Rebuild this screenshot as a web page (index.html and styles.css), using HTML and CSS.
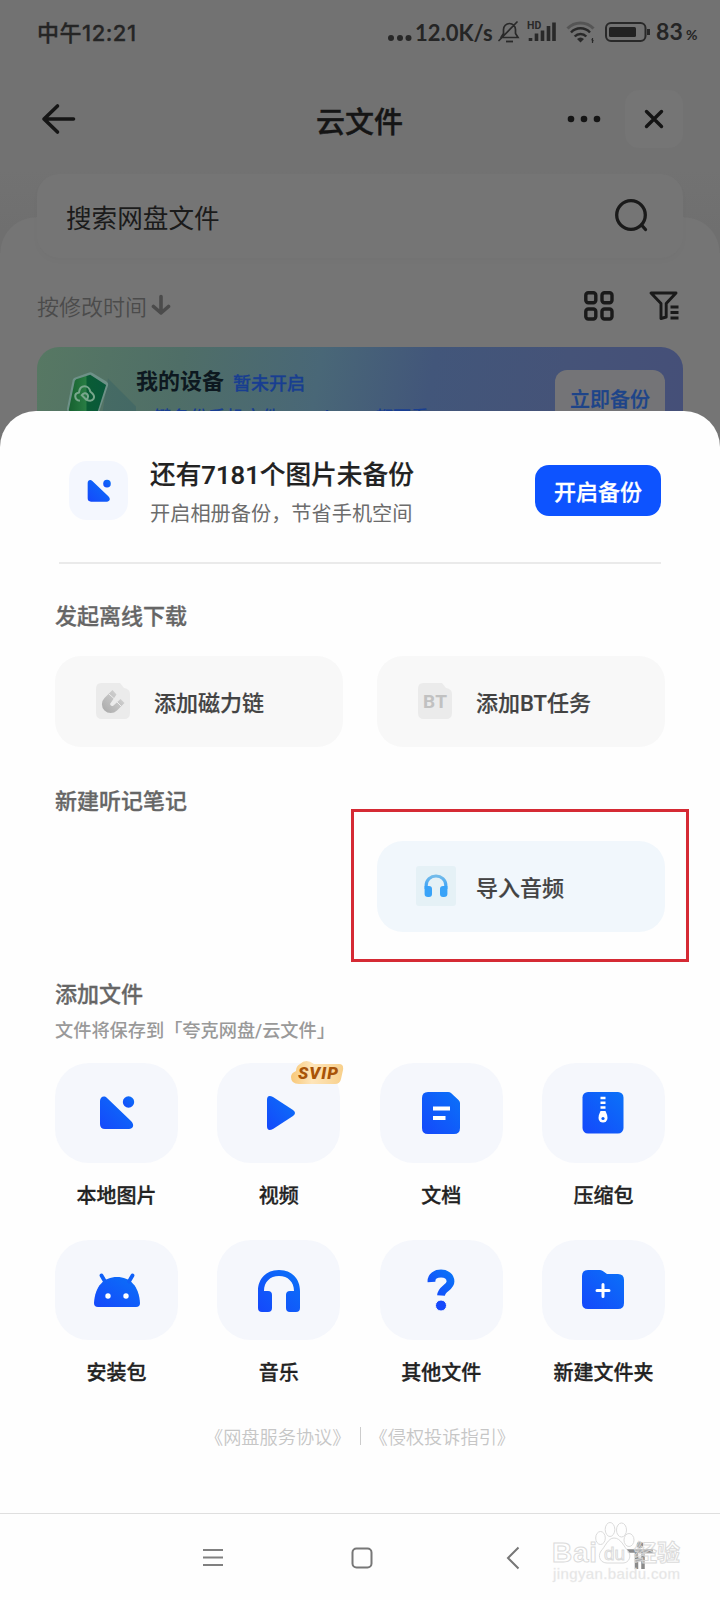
FILE: index.html
```html
<!DOCTYPE html>
<html lang="zh-CN">
<head>
<meta charset="utf-8">
<title>云文件</title>
<link rel="stylesheet" href="styles.css">
</head>
<body>
<svg width="0" height="0" class="defs">
  <defs>
    <linearGradient id="blue" x1="1" y1="0" x2="0" y2="1"><stop offset="0" stop-color="#0a72f8"/><stop offset="1" stop-color="#1548fb"/></linearGradient>
    <linearGradient id="sky" x1="0" y1="0" x2="0" y2="1"><stop offset="0" stop-color="#72bbea"/><stop offset="1" stop-color="#359ff8"/></linearGradient>
    <linearGradient id="gray" x1="1" y1="0" x2="0" y2="1"><stop offset="0" stop-color="#dadada"/><stop offset="1" stop-color="#a8a8a8"/></linearGradient>
    <linearGradient id="gold" x1="0" y1="0" x2="1" y2="0"><stop offset="0" stop-color="#f8c878"/><stop offset=".4" stop-color="#fee5ba"/><stop offset="1" stop-color="#f8d08b"/></linearGradient>
    <linearGradient id="green" x1="0" y1="0" x2="1" y2="0"><stop offset="0" stop-color="#16602f"/><stop offset=".45" stop-color="#287c43"/><stop offset=".5" stop-color="#0a5c35"/><stop offset="1" stop-color="#08583a"/></linearGradient>
  </defs>
</svg>
<main class="screen">
  <section class="page">
    <div class="status">
      <span class="clock">中午12:21</span>
      <svg class="status-dots" width="24" height="8" viewBox="0 0 24 8" fill="#272727"><circle cx="3" cy="4" r="3"/><circle cx="12" cy="4" r="3"/><circle cx="20.500" cy="4" r="3"/></svg>
      <span class="speed">12.0K/s</span>
      <svg class="status-icons" width="160" height="26" viewBox="498 20 160 26" fill="none" stroke="#292929" stroke-width="1.700">
        <path d="M501 37.500h17l-2.500-4v-4a6 6 0 0 0-12 0v4L501 37.500M499 40.500L517 22" stroke-linecap="round"/>
        <path d="M506 41.500h7" stroke-width="1.800"/>
        <text x="527" y="29" fill="#292929" stroke="none" class="hd">HD</text>
        <path d="M530.500 41v-3M536.500 41v-7.500M542.500 41V30.500M548.500 41V26M554 41V22.500" stroke-width="3.600"/>
        <path d="M567.500 28.500a18 18 0 0 1 26 0" stroke="#555" stroke-width="3"/>
        <path d="M571 32.500a13 13 0 0 1 19 0M574.700 36.500a8 8 0 0 1 11.600 0" stroke-width="2.500"/>
        <path d="M577 39l3.500 3.500L584 39q-3.500-3-7 0" fill="#292929" stroke="none"/>
        <path d="M592.500 38v5M591.500 39.500l2 1.500" stroke-width="1.200"/>
        <rect x="606" y="23" width="39.500" height="18" rx="5" stroke-width="2"/>
        <rect x="609" y="27" width="27" height="10" rx="1.500" fill="#222" stroke="none"/>
        <path d="M648.500 29v6" stroke-width="3"/>
      </svg>
      <span class="battery">83<small>%</small></span>
    </div>
    <header class="topbar">
      <svg class="back" width="36" height="32" viewBox="0 0 36 32" fill="none" stroke="#151515" stroke-width="3.600" stroke-linecap="round" stroke-linejoin="round"><path d="M33.500 16H4M17.500 3L4 16l13.500 13"/></svg>
      <h1>云文件</h1>
      <svg class="more" width="36" height="10" viewBox="0 0 36 10" fill="#151515"><circle cx="5" cy="5" r="3.300"/><circle cx="18" cy="5" r="3.300"/><circle cx="31" cy="5" r="3.300"/></svg>
      <div class="close"><svg width="22" height="22" viewBox="0 0 22 22" stroke="#141414" stroke-width="3.400" stroke-linecap="round"><path d="M3.500 3.500l15 15M18.500 3.500l-15 15"/></svg></div>
    </header>
    <div class="panel">
      <div class="search"><span>搜索网盘文件</span>
        <svg width="36" height="36" viewBox="0 0 36 36" fill="none" stroke="#1a1a1a" stroke-width="3.300" stroke-linecap="round"><circle cx="18" cy="18" r="14.300"/><path d="M28.500 28l4 4.500"/></svg>
      </div>
      <div class="sort"><span>按修改时间</span>
        <svg class="down" width="20" height="22" viewBox="0 0 20 22" fill="none" stroke="#4b4b4b" stroke-width="3.600" stroke-linecap="round" stroke-linejoin="round"><path d="M10 2.500V18M2.500 12.500L10 19l7.500-6.500"/></svg>
        <svg class="grid-icon" width="30" height="30" viewBox="0 0 30 30" fill="none" stroke="#1a1a1a" stroke-width="3.400"><rect x="1.800" y="1.800" width="10" height="10" rx="2.500"/><rect x="18" y="1.800" width="10" height="10" rx="2.500"/><rect x="1.800" y="18" width="10" height="10" rx="2.500"/><rect x="18" y="18" width="10" height="10" rx="2.500"/></svg>
        <svg width="32" height="32" viewBox="0 0 32 32" fill="none" stroke="#1a1a1a" stroke-width="2.900" stroke-linejoin="round"><path d="M3 3h25L18.200 13.500V27l-5.200 1.500v-15z"/><path d="M22.500 17h8M22.500 22.500h8M22.500 28h8"/></svg>
      </div>
      <div class="device">
        <svg class="shield" width="76" height="66" viewBox="0 0 76 66"><path d="M46 12l32 32v30H36z" fill="#164d63" opacity=".2"/><path d="M29 6q-2-1-4 0L11 11q-3 1-3 4L2 45q0 3 3 5l10 8h18l13-38q1-3-2-5z" fill="#6e9188"/><path d="M27 8L12 13q-2 1-2 4L4 46l12 14h15L44 19z" fill="url(#green)"/><path d="M16 36c-6-1-7-8-1-9 1-9 11-8 12-1 8 6 3 12-4 9l-5-5c4-5 9 0 5 5" fill="none" stroke="#78a68c" stroke-width="2.200"/></svg>
        <div class="device-copy">
          <div class="device-title"><strong>我的设备</strong><span>暂未开启</span></div>
          <div class="device-sub">一键备份手机文件，Pad、Pc/都可看</div>
        </div>
        <div class="device-btn">立即备份</div>
      </div>
    </div>
  </section>

  <section class="sheet">
    <div class="notice">
      <div class="notice-icon"><svg width="24" height="24" viewBox="0 0 36 36" fill="url(#blue)"><path d="M1 6C1 2 5 0 8 3l24 23c4 4 2 8-2 8H6q-5 0-5-5z"/><circle cx="30" cy="7" r="5.700"/></svg></div>
      <div class="notice-copy"><h2>还有7181个图片未备份</h2><p>开启相册备份，节省手机空间</p></div>
      <div class="start">开启备份</div>
    </div>
    <h3 class="h-download">发起离线下载</h3>
    <div class="pair">
      <div class="action">
        <svg width="36" height="38" viewBox="0 0 36 38"><path d="M6 1h19l4 5q6 1 6 6v19q0 6-6 6H7q-6 0-6-6V7q0-6 5-6z" fill="#ebebeb"/><path d="M17.500 8l-8 8a8.800 8.800 0 0 0 12.500 12.500l7.500-7.500-4-4-7 6.500q-2.500 1.500-3.500-1.500l6.500-9.500z" fill="url(#gray)"/><path d="M14 12l5 4.500M22 20l4.500 4.500" stroke="#ededed" stroke-width="1"/></svg>
        <span>添加磁力链</span>
      </div>
      <div class="action">
        <svg width="36" height="38" viewBox="0 0 36 38"><path d="M6 1h19l4 5q6 1 6 6v19q0 6-6 6H7q-6 0-6-6V7q0-6 5-6z" fill="#ebebeb"/><text x="6" y="26" class="bt" textLength="24">BT</text></svg>
        <span>添加BT任务</span>
      </div>
    </div>
    <h3 class="h-note">新建听记笔记</h3>
    <div class="highlight">
      <div class="action audio">
        <svg width="40" height="40" viewBox="0 0 40 40"><rect width="40" height="40" rx="3" fill="#e5f1f6"/><path d="M10.200 23v-4a9.800 9 0 0 1 19.600 0v4" fill="none" stroke="url(#sky)" stroke-width="3.200"/><path d="M8.600 20h4.400q3 0 3 3v5q0 3-3 3h-1q-3.400 0-3.400-3zM31.400 20H27q-3 0-3 3v5q0 3 3 3h1q3.400 0 3.400-3z" fill="#39a3f8"/></svg>
        <span>导入音频</span>
      </div>
    </div>
    <h3 class="h-add">添加文件</h3>
    <p class="save-path">文件将保存到「夸克网盘/云文件」</p>
    <div class="tiles">
      <div class="item"><div class="tile"><svg width="36" height="36" viewBox="0 0 36 36" fill="url(#blue)"><path d="M1 6C1 2 5 0 8 3l24 23c4 4 2 8-2 8H6q-5 0-5-5z"/><circle cx="29.500" cy="7" r="5.700"/></svg></div><span>本地图片</span></div>
      <div class="item"><div class="tile"><svg class="play" width="32" height="38" viewBox="0 0 32 38" fill="url(#blue)"><path d="M2 6q0-6 6-3l20 13q4 3 0 6L8 35q-6 3-6-3z"/></svg>
        <svg class="svip" width="54" height="26" viewBox="0 0 54 26"><path d="M10 4q6-6 14 0h25q5 0 4 6l-2 9q-1 5-6 5H9q-8 0-8-7 0-4 5-6 0-5 4-7z" fill="url(#gold)"/><text x="8" y="19" class="svip-text" fill="#a85308" textLength="40">SVIP</text></svg></div><span>视频</span></div>
      <div class="item"><div class="tile"><svg width="38" height="42" viewBox="0 0 38 42"><path d="M6 0h20q2 0 3 1l7.500 7q1.500 1.500 1.500 3v25q0 6-6 6H6q-6 0-6-6V6q0-6 6-6z" fill="url(#blue)"/><path d="M11 16.500h17M11 26h12.500" stroke="#fff" stroke-width="4"/></svg></div><span>文档</span></div>
      <div class="item"><div class="tile"><svg width="42" height="42" viewBox="0 0 42 42"><rect x=".5" y="0" width="41" height="41.500" rx="5.500" fill="url(#blue)"/><path d="M18.500 6h5M18.500 10.800h5M18.500 15.500h5" stroke="#fff" stroke-width="2.400"/><path d="M18.500 19h5q2 4 2 7a4.500 4.500 0 0 1-9 0q0-3 2-7z" fill="#fff"/><circle cx="21" cy="26.500" r="1.600" fill="#0b60fa"/></svg></div><span>压缩包</span></div>
      <div class="item"><div class="tile"><svg class="android" width="46" height="34" viewBox="0 -2 46 34" fill="url(#blue)"><path d="M0 28C1 11 10 2 23 2s22 9 23 26q0 4-4 4H4q-4 0-4-4z"/><path d="M7.500 .5l3.500 6M38.500 .5l-3.500 6" stroke="#0f60f8" stroke-width="3.800" stroke-linecap="round"/><circle cx="14" cy="21" r="2.700" fill="#fff"/><circle cx="32" cy="21" r="2.700" fill="#fff"/></svg></div><span>安装包</span></div>
      <div class="item"><div class="tile"><svg class="phones" width="42" height="42" viewBox="0 0 42 42" fill="url(#blue)"><path d="M0 21C0 9 8 0 21 0s21 9 21 21v17q0 4-4 4h-6q-4 0-4-4V25q0-4 4-4h4C36 12 30 6 21 6S6 12 6 21h4q4 0 4 4v13q0 4-4 4H4q-4 0-4-4z"/></svg></div><span>音乐</span></div>
      <div class="item"><div class="tile"><svg width="28" height="42" viewBox="0 0 28 42"><path d="M4.500 13C4 7 9 4.500 14 4.500c5 0 9.500 3 9.500 8 0 6-9 7-9.500 14" fill="none" stroke="url(#blue)" stroke-width="7.800" stroke-linejoin="round"/><circle cx="14" cy="36.500" r="5.500" fill="#1548fb" stroke="#f5f7fc"/></svg></div><span>其他文件</span></div>
      <div class="item"><div class="tile"><svg width="42" height="42" viewBox="0 0 42 42"><path d="M6 1h12q2 0 3.500 1.500L25 5h11q6 0 6 6v23q0 6-6 6H6q-6 0-6-6V7q0-6 6-6z" fill="url(#blue)"/><path d="M15 21.500h12M21 15.500v12" stroke="#fff" stroke-width="3" stroke-linecap="round"/></svg></div><span>新建文件夹</span></div>
    </div>
    <div class="legal"><span>《网盘服务协议》</span><i></i><span>《侵权投诉指引》</span></div>
    <nav class="nav">
      <svg width="20" height="22" viewBox="0 0 20 22" stroke="#808080" stroke-width="2"><path d="M0 3h20M0 10.500h20M0 18h20"/></svg>
      <svg width="22" height="22" viewBox="0 0 22 22" fill="none" stroke="#777" stroke-width="2"><rect x="1.500" y="1.500" width="19" height="19" rx="4"/></svg>
      <svg width="14" height="24" viewBox="0 0 14 24" fill="none" stroke="#777" stroke-width="2"><path d="M12.500 1.500L2 12l10.500 10.500"/></svg>
      <svg class="person" width="28" height="30" viewBox="626 1540 28 30" fill="none" stroke="#8a8a8a" stroke-width="3.500"><circle cx="640" cy="1544" r="1.500"/><path d="M627 1550h26M636.500 1550v18M643 1550v18M637 1558.500h6"/></svg>
    </nav>
    <svg class="watermark" width="132" height="66" viewBox="550 1520 132 66" fill="#fff" stroke="#d8d8d8" stroke-width="1">
      <ellipse cx="600.500" cy="1538" rx="4.800" ry="6.500"/><ellipse cx="610" cy="1529.500" rx="4.800" ry="7"/><ellipse cx="621.500" cy="1530" rx="5" ry="7"/><ellipse cx="629" cy="1540" rx="5" ry="6.500"/>
      <path d="M614 1538c-6 0-9 9-13 13-4 6 0 12 6 12h16c6 0 9-7 5-12-4-4-7-13-14-13z"/>
      <text x="552" y="1562" class="wm-main" textLength="45">Bai</text><text x="604" y="1560" class="wm-du">du</text><text x="634" y="1561" class="wm-cn" fill-opacity=".35">经验</text><text x="553" y="1579" class="wm-url" textLength="127">jingyan.baidu.com</text>
    </svg>
  </section>
</main>
</body>
</html>
```

FILE: styles.css
```css
* { box-sizing: border-box; }
body { margin: 0; font-family: Roboto, "Noto Sans CJK SC", sans-serif; }
h1, h2, h3, p { margin: 0; font-weight: 500; white-space: nowrap; }
svg { display: block; flex: none; }
.defs { position: absolute; }
.screen { position: relative; width: 720px; height: 1600px; overflow: hidden; background: #fefefe; }

.page { height: 460px; background: linear-gradient(#727272 0, #727272 170px, #6f6f6f 230px); overflow: hidden; }
.status { height: 64px; display: flex; align-items: center; padding-left: 37px; color: #252525; font: 500 22px/32px Lato, "Noto Sans CJK SC", sans-serif; white-space: nowrap; }
.clock { width: 351px; padding-top: 1px; font-family: Inter, "Noto Sans CJK SC", sans-serif; font-weight: 500; font-size: 22px; letter-spacing: .5px; -webkit-text-stroke: .3px #252525; }
.status-dots { margin-top: 12px; }
.speed { width: 83px; margin-left: 3px; padding-top: 1px; font-size: 22px; font-weight: 700; }
.status-icons { margin-top: 1px; }
.battery { padding-top: 1px; font-size: 23px; font-weight: 700; margin-left: -2px; letter-spacing: .2px; }
.battery small { font-size: 14px; margin-left: 3px; }
.hd { font: 700 10.500px Roboto, sans-serif; }

.topbar { height: 110px; display: flex; align-items: flex-start; padding: 26px 37px 0 40px; color: #151515; }
.back { margin-top: 13px; }
.topbar h1 { margin: 13px 0 0 240px; width: 250px; font-size: 29px; line-height: 40px; -webkit-text-stroke: .4px; }
.more { margin-top: 24px; }
.close { width: 58px; height: 58px; margin-left: 23px; border-radius: 14px; background: #757575; display: grid; place-items: center; }

.panel { padding: 0 37px; background: radial-gradient(circle at 36px 79px, #757575 35px, transparent 36px) 0 0 / 36px 79px no-repeat, radial-gradient(circle at 0 79px, #757575 35px, transparent 36px) 100% 0 / 36px 79px no-repeat, linear-gradient(#757575, #757575) 36px 43px / 648px 400px no-repeat, linear-gradient(#757575, #757575) 0 79px / 720px 400px no-repeat; }
.search { height: 84px; border-radius: 22px; background: #757575; display: flex; align-items: center; justify-content: space-between; padding: 0 34px 0 29px; font-size: 25.600px; line-height: 36px; color: #1b1b1b; box-shadow: 0 3px 6px rgba(0,0,0,.018); }
.search span { font-weight: 400; padding-top: 5px; }
.search svg { margin-top: -2px; }
.sort { height: 89px; display: flex; align-items: center; padding: 7px 3px 0 0; font-size: 22px; color: #4b4b4b; font-weight: 350; }
.sort span { margin-top: -2px; }
.down { margin: -3px 0 0 4px; }
.grid-icon { margin: 0 34px 0 auto; }
.device { height: 113px; border-radius: 22px 22px 0 0; background: linear-gradient(100deg, #577863 0%, #4f6e67 22%, #496777 43%, #42567a 60%, #455378 80%, #454f78 100%); display: flex; }
.shield { margin: 18px 0 0 28px; width: 71px; }
.device-copy { width: 419px; padding-top: 16px; }
.device-title { display: flex; align-items: center; line-height: 32px; font-size: 22px; color: #0d1820; }
.device-title strong { font-weight: 600; }
.device-title span { font-size: 18px; font-weight: 500; margin: 5px 0 0 9px; color: #183e91; -webkit-text-stroke: .3px; }
.device-sub { font-size: 18px; line-height: 28px; margin-top: 4px; color: #183e91; font-weight: 500; white-space: nowrap; }
.device-btn { width: 110px; height: 58px; margin-top: 23px; border-radius: 12px; background: #747477; text-align: center; font-weight: 500; font-size: 20px; line-height: 60px; color: #1d4489; -webkit-text-stroke: .3px; }

.sheet { position: absolute; left: 0; top: 411px; width: 720px; height: 1189px; padding: 0 55px; border-radius: 36px 36px 0 0; background: #fefefe; }
.notice { height: 153px; margin: 0 4px; padding: 50px 0 0 10px; border-bottom: 2px solid #eaeaea; display: flex; }
.notice-icon { width: 59px; height: 59px; border-radius: 18px; background: #f4f7fe; display: grid; place-items: center; }
.notice-copy { width: 407px; padding-left: 22px; }
.notice h2 { font-size: 25.700px; line-height: 36px; margin-top: -4px; color: #222; -webkit-text-stroke: .2px; }
.notice p { font-size: 20.200px; line-height: 30px; margin-top: 6px; color: #6c6c6c; font-weight: 400; }
.start { width: 126px; height: 51px; margin-top: 4px; border-radius: 14px; background: #0d53ff; color: #fff; font-weight: 500; font-size: 22px; line-height: 56px; text-align: center; -webkit-text-stroke: .3px; }
.sheet h3 { font-size: 22px; line-height: 32px; color: #666; -webkit-text-stroke: .3px; }
.h-download { padding-top: 37px; }
.pair { display: flex; gap: 34px; margin-top: 23px; }
.action { width: 288px; height: 91px; border-radius: 26px; padding: 0 0 2px 40px; background: #f8f8f8; display: flex; align-items: center; font-weight: 500; font-size: 22px; color: #434343; white-space: nowrap; -webkit-text-stroke: .2px; }
.action span { margin: 1px 0 0 23px; }
.bt { font: 700 19px Roboto, sans-serif; fill: #c1c1c1; }
.h-note { margin-top: 39px; }
.highlight { width: 338px; height: 153px; margin: -9px 0 0 296px; padding: 29px 23px; border: 3px solid #d52a34; }
.audio { background: #f1f7fc; padding-left: 39px; }
.audio span { margin-left: 20px; }
.h-add { margin-top: 17px; }
.save-path { font-size: 18.200px; line-height: 28px; margin-top: 6px; color: #999; }
.tiles { width: 610px; display: grid; grid-template-columns: repeat(4, 123px); justify-content: space-between; row-gap: 31px; margin-top: 18px; }
.item { text-align: center; height: 146px; font-weight: 500; font-size: 20px; line-height: 30px; color: #222; white-space: nowrap; -webkit-text-stroke: .3px; }
.tile { position: relative; height: 100px; border-radius: 34px; background: #f5f7fc; display: grid; place-items: center; margin-bottom: 18px; -webkit-text-stroke: 0; }
.play { margin-left: 5px; }
.phones { margin-top: 2px; }
.svip { position: absolute; right: -4px; top: -3px; }
.svip-text { font: italic 900 17px Roboto, sans-serif; }
.legal { display: flex; justify-content: center; align-items: center; height: 30px; margin-top: 35px; color: #c6c6c6; font-size: 18.200px; font-weight: 350; }
.legal i { width: 1px; height: 18px; margin: 0 9px; background: #ccc; }
.nav { height: 88px; margin: 62px -55px 0; padding: 0 66px 0 203px; border-top: 1px solid #dfdfdf; display: flex; align-items: center; justify-content: space-between; }
.nav svg:nth-child(2) { margin-left: 22px; }
.nav svg:nth-child(3) { margin-left: 27px; }
.person { margin-top: -4px; }
.watermark { position: absolute; left: 550px; top: 1109px; opacity: .9; }
.wm-main { font: 700 28px "Liberation Sans", sans-serif; }
.wm-du { font: 400 19px "Liberation Sans", sans-serif; }
.wm-cn { font: 700 23px "Noto Sans CJK SC", sans-serif; }
.wm-url { font: 400 15px "Liberation Sans", sans-serif; fill: #e0e0e0; stroke: #eee; stroke-width: .300px; }
```
